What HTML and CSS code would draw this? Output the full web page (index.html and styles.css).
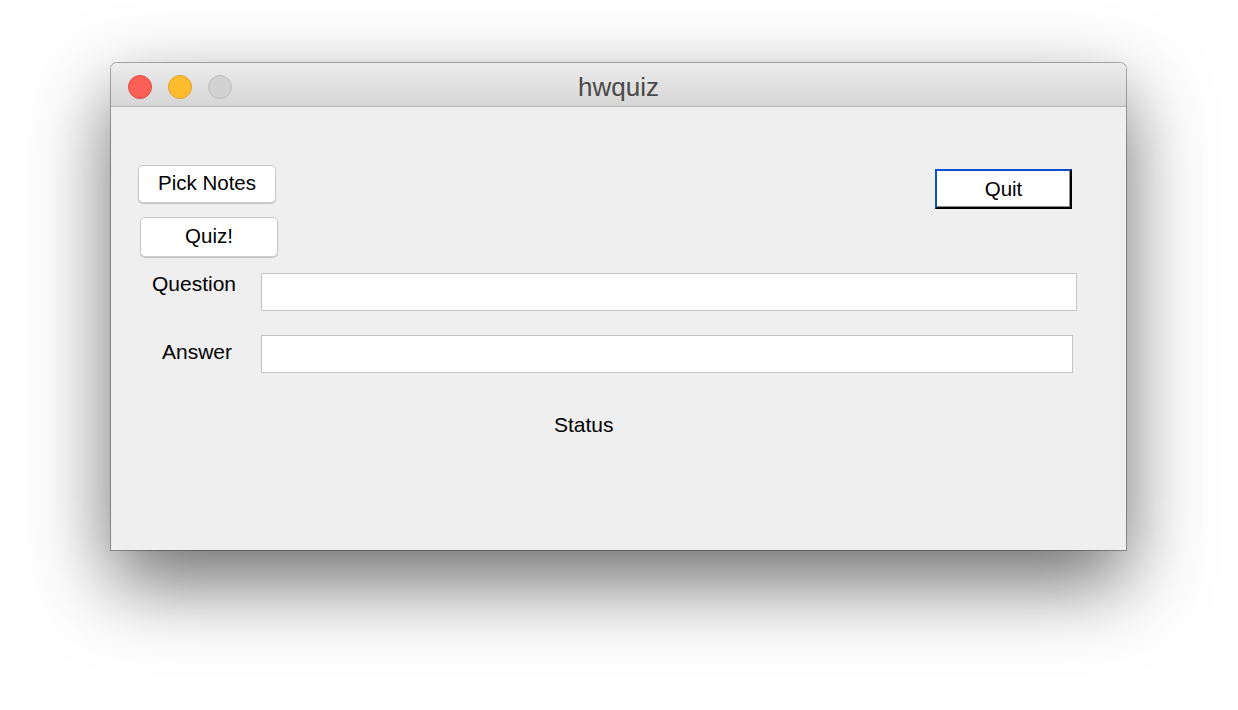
FILE: index.html
```html
<!DOCTYPE html>
<html>
<head>
<meta charset="utf-8">
<link rel="stylesheet" href="styles.css">
</head>
<body>
<div class="window">
  <div class="titlebar">
    <div class="lights">
      <span class="light red"></span>
      <span class="light yellow"></span>
      <span class="light gray"></span>
    </div>
    <div class="title">hwquiz</div>
  </div>
  <div class="content">
    <div class="top-row">
      <div class="left-buttons">
        <button class="mac-btn">Pick Notes</button>
        <button class="mac-btn quiz">Quiz!</button>
      </div>
      <button class="quit-btn">Quit</button>
    </div>
    <div class="form-row question-row">
      <label class="field-label q-label">Question</label>
      <div class="field q-field"></div>
    </div>
    <div class="form-row answer-row">
      <label class="field-label a-label">Answer</label>
      <div class="field a-field"></div>
    </div>
    <div class="status">Status</div>
  </div>
</div>
</body>
</html>
```

FILE: styles.css
```css
html, body {
  margin: 0;
  padding: 0;
  background: #ffffff;
}
body {
  width: 1238px;
  height: 710px;
  overflow: hidden;
  font-family: "Liberation Sans", Arial, sans-serif;
}
.window {
  margin: 63px 0 0 111px;
  width: 1015px;
  height: 487px;
  background: #efefef;
  border-radius: 6px 6px 0 0;
  box-shadow: 0 32px 80px rgba(0, 0, 0, 0.58), 0 0 0 1px rgba(0, 0, 0, 0.3);
  display: flex;
  flex-direction: column;
}
.titlebar {
  height: 43px;
  border-bottom: 1px solid #b8b8b8;
  border-radius: 6px 6px 0 0;
  background: linear-gradient(#ececec, #d6d6d6);
  display: flex;
  align-items: flex-start;
  position: relative;
}
.lights {
  display: flex;
  gap: 16px;
  padding: 12px 0 0 17px;
}
.light {
  width: 24px;
  height: 24px;
  border-radius: 50%;
  box-sizing: border-box;
}
.red { background: #fe5f57; border: 1px solid #e2463f; }
.yellow { background: #febc2e; border: 1px solid #dfa023; }
.gray { background: #d2d2d2; border: 1px solid #bcbcbc; }
.title {
  position: absolute;
  left: 0;
  right: 0;
  top: 9px;
  text-align: center;
  font-size: 26px;
  color: #4a4a4a;
  pointer-events: none;
}
.content {
  flex: 1;
  padding-top: 58px;
  color: #000;
  font-size: 21px;
}
.top-row {
  display: flex;
  justify-content: space-between;
  align-items: flex-start;
  padding: 0 54px 0 27px;
}
.left-buttons {
  display: flex;
  flex-direction: column;
  gap: 14px;
}
.mac-btn {
  width: 138px;
  height: 38px;
  background: #ffffff;
  border: 1px solid #c9c9c9;
  border-radius: 5px;
  box-shadow: 0 1px 1px rgba(0, 0, 0, 0.18);
  font-family: "Liberation Sans", Arial, sans-serif;
  font-size: 20.5px;
  color: #000;
  padding: 0 0 3px 0;
}
.mac-btn.quiz {
  height: 40px;
  margin-left: 2px;
}
.quit-btn {
  margin-top: 4px;
  width: 137px;
  height: 40px;
  background: #ffffff;
  border-style: solid;
  border-width: 2px 2px 2px 2px;
  border-color: #0b4fcc #000000 #000000 #0b4fcc;
  box-shadow: inset -1px -1px 0 #8a8a8a;
  font-family: "Liberation Sans", Arial, sans-serif;
  font-size: 20.5px;
  color: #000;
  padding: 0;
}
.form-row {
  display: flex;
  align-items: flex-start;
}
.question-row {
  margin-top: 16px;
}
.answer-row {
  margin-top: 24px;
}
.field-label {
  width: 150px;
  box-sizing: border-box;
  font-size: 21px;
}
.q-label {
  padding: 0 0 0 41px;
  margin-top: -1px;
}
.a-label {
  padding: 0 0 0 51px;
  margin-top: 5px;
}
.field {
  height: 38px;
  box-sizing: border-box;
  background: #ffffff;
  border: 1px solid #c4c4c4;
}
.q-field { width: 816px; }
.a-field { width: 812px; }
.status {
  margin-top: 40px;
  padding-left: 443px;
  font-size: 21px;
}
```
